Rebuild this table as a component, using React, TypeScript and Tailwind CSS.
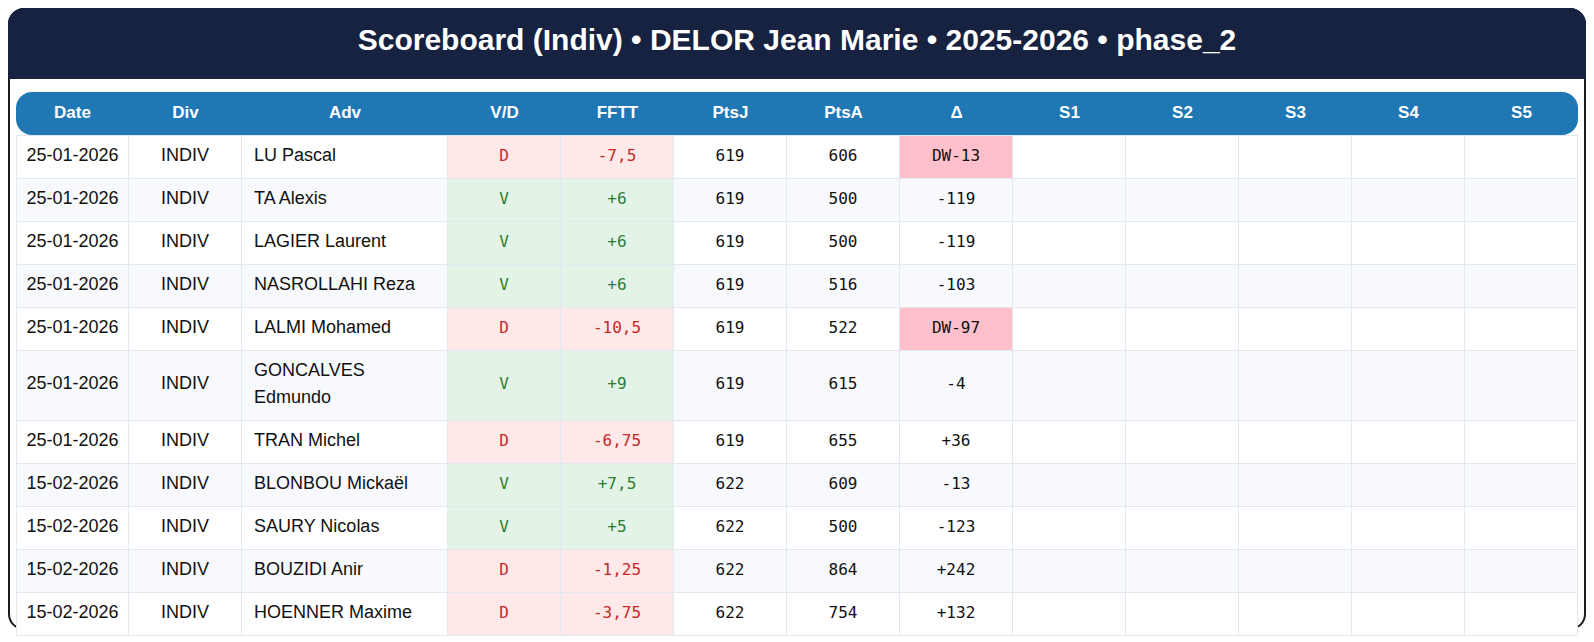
import React from "react";

type Row = {
  date: string;
  adv: string;
  res: "V" | "D";
  fftt: string;
  ptsJ: string;
  ptsA: string;
  delta: string;
  dw?: boolean;
};

const rows: Row[] = [
  { date: "25-01-2026", adv: "LU Pascal", res: "D", fftt: "-7,5", ptsJ: "619", ptsA: "606", delta: "DW-13", dw: true },
  { date: "25-01-2026", adv: "TA Alexis", res: "V", fftt: "+6", ptsJ: "619", ptsA: "500", delta: "-119" },
  { date: "25-01-2026", adv: "LAGIER Laurent", res: "V", fftt: "+6", ptsJ: "619", ptsA: "500", delta: "-119" },
  { date: "25-01-2026", adv: "NASROLLAHI Reza", res: "V", fftt: "+6", ptsJ: "619", ptsA: "516", delta: "-103" },
  { date: "25-01-2026", adv: "LALMI Mohamed", res: "D", fftt: "-10,5", ptsJ: "619", ptsA: "522", delta: "DW-97", dw: true },
  { date: "25-01-2026", adv: "GONCALVES Edmundo", res: "V", fftt: "+9", ptsJ: "619", ptsA: "615", delta: "-4" },
  { date: "25-01-2026", adv: "TRAN Michel", res: "D", fftt: "-6,75", ptsJ: "619", ptsA: "655", delta: "+36" },
  { date: "15-02-2026", adv: "BLONBOU Mickaël", res: "V", fftt: "+7,5", ptsJ: "622", ptsA: "609", delta: "-13" },
  { date: "15-02-2026", adv: "SAURY Nicolas", res: "V", fftt: "+5", ptsJ: "622", ptsA: "500", delta: "-123" },
  { date: "15-02-2026", adv: "BOUZIDI Anir", res: "D", fftt: "-1,25", ptsJ: "622", ptsA: "864", delta: "+242" },
  { date: "15-02-2026", adv: "HOENNER Maxime", res: "D", fftt: "-3,75", ptsJ: "622", ptsA: "754", delta: "+132" },
];

const headers = ["Date", "Div", "Adv", "V/D", "FFTT", "PtsJ", "PtsA", "Δ", "S1", "S2", "S3", "S4", "S5"];

const sans = "font-['Liberation_Sans',Arial,sans-serif]";
const mono = "font-['DejaVu_Sans_Mono',monospace] text-[16px]";

export default function App() {
  const cell = "border-r border-b border-[#e2e8f0] pt-[5.5px] pb-[9.5px] leading-[27px] align-middle";

  return (
    <div className={`${sans} bg-white min-h-[642px] pt-2 pl-2`}>
      <div className="w-[1578px] h-[622px] border-2 border-[#1c1c1c] rounded-2xl px-[6px]">
        <div className="-mx-2 -mt-[2px] bg-[#162240] rounded-t-2xl pt-[14px] pb-[21px] text-center">
          <h1 className="text-white font-bold text-[30px] leading-[36px]">
            Scoreboard (Indiv) • DELOR Jean Marie • 2025-2026 • phase_2
          </h1>
        </div>

        <table className="mt-[13px] w-[1562px] table-fixed border-separate border-spacing-0 text-[18px] text-[#111]">
          <colgroup>
            <col className="w-[113px]" />
            <col className="w-[113px]" />
            <col className="w-[206px]" />
            {Array.from({ length: 10 }).map((_, i) => (
              <col key={i} className="w-[113px]" />
            ))}
          </colgroup>
          <thead>
            <tr>
              {headers.map((h, i) => (
                <th
                  key={h}
                  className={`h-[43px] bg-[#1f77b4] text-white font-bold text-[17px] leading-[27px] p-0 pb-[2px] text-center ${
                    i === 0 ? "rounded-l-2xl" : ""
                  } ${i === headers.length - 1 ? "rounded-r-2xl" : ""}`}
                >
                  {h}
                </th>
              ))}
            </tr>
          </thead>
          <tbody>
            {rows.map((r, idx) => {
              const stripe = idx % 2 === 1 ? "bg-[#f7f9fd]" : "bg-white";
              const top = idx === 0 ? "border-t" : "";
              const resCls =
                r.res === "V" ? "bg-[#e3f4e7] text-[#2e7d32]" : "bg-[#ffe8e8] text-[#c62828]";
              return (
                <tr key={idx} className={stripe}>
                  <td className={`${cell} ${top} border-l px-1 whitespace-nowrap text-center`}>{r.date}</td>
                  <td className={`${cell} ${top} px-1 text-center`}>INDIV</td>
                  <td className={`${cell} ${top} px-3 text-left`}>{r.adv}</td>
                  <td className={`${cell} ${top} ${mono} ${resCls} px-1 text-center`}>{r.res}</td>
                  <td className={`${cell} ${top} ${mono} ${resCls} px-1 text-center`}>{r.fftt}</td>
                  <td className={`${cell} ${top} ${mono} px-1 text-center`}>{r.ptsJ}</td>
                  <td className={`${cell} ${top} ${mono} px-1 text-center`}>{r.ptsA}</td>
                  <td className={`${cell} ${top} ${mono} px-1 text-center ${r.dw ? "bg-[#ffc0cb]" : ""}`}>
                    {r.delta}
                  </td>
                  {Array.from({ length: 5 }).map((_, i) => (
                    <td key={i} className={`${cell} ${top} px-1`}></td>
                  ))}
                </tr>
              );
            })}
          </tbody>
        </table>
      </div>
    </div>
  );
}
